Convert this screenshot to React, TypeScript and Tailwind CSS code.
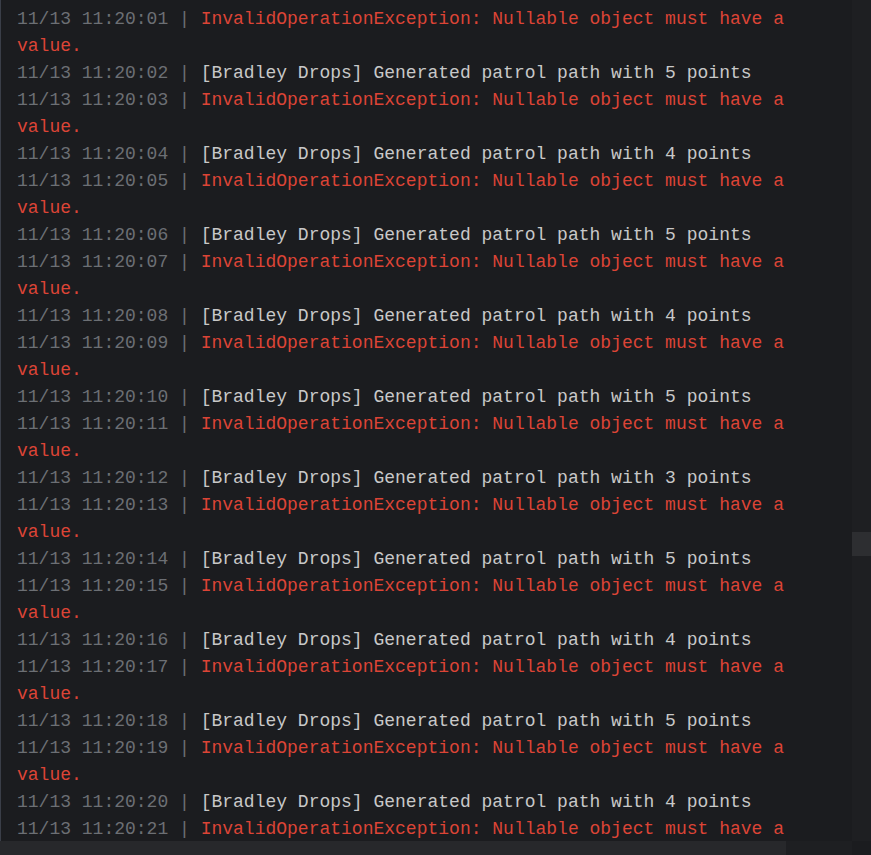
import React from "react";

type Entry = { time: string; kind: "err" | "info"; text: string };

const entries: Entry[] = [];
const points = [5, 4, 5, 4, 5, 3, 5, 4, 5, 4];
for (let i = 1; i <= 21; i++) {
  const t = `11/13 11:20:${String(i).padStart(2, "0")}`;
  if (i % 2 === 1) {
    entries.push({ time: t, kind: "err", text: "InvalidOperationException: Nullable object must have a value." });
  } else {
    entries.push({
      time: t,
      kind: "info",
      text: `[Bradley Drops] Generated patrol path with ${points[i / 2 - 1]} points`,
    });
  }
}

export default function App() {
  return (
    <div className="w-[871px] h-[855px] flex flex-col bg-[#1b1c1f] overflow-hidden">
      <div className="flex flex-1 min-h-0">
        <div className="flex-1 min-w-0 border-l border-[#3a3e48] pl-4 pr-4 pt-[6px] overflow-hidden">
          <div
            className="text-[18px] leading-[27px] whitespace-pre-wrap"
            style={{ fontFamily: '"Courier New", "Liberation Mono", monospace' }}
          >
            {entries.map((e, i) => (
              <div key={i}>
                <span className="text-[#6c6f74]">{e.time} | </span>
                <span className={e.kind === "err" ? "text-[#dc4436]" : "text-[#c8c8c8]"}>{e.text}</span>
              </div>
            ))}
          </div>
        </div>
        <div className="w-[19px] bg-[#1e1f22] flex flex-col">
          <div className="h-[532px]" />
          <div className="h-[24px] bg-[#2d2e31]" />
        </div>
      </div>
      <div className="h-[14px] flex">
        <div className="w-[786px] bg-[#27282b]" />
        <div className="w-[66px] bg-[#1e1f22]" />
        <div className="w-[19px] bg-[#1b1c1f]" />
      </div>
    </div>
  );
}
